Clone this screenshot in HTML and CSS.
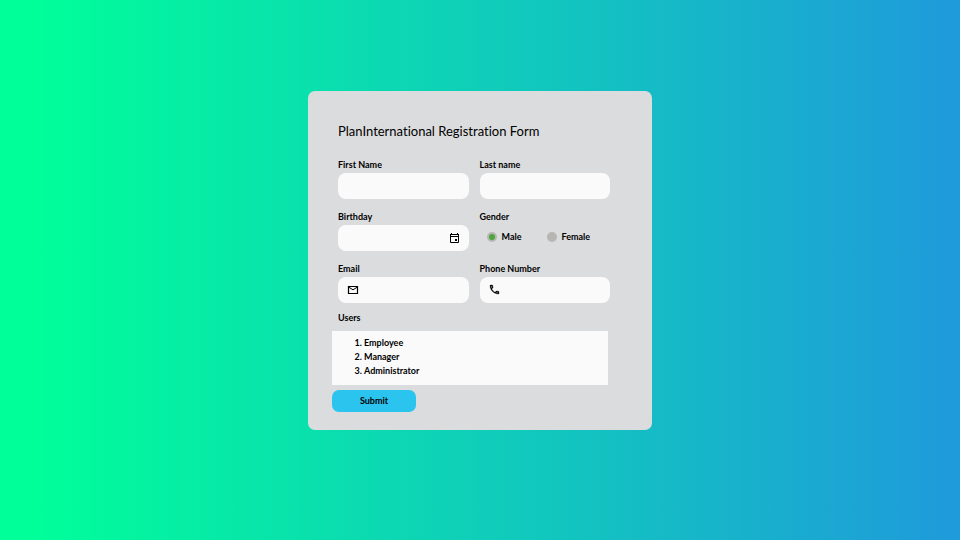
FILE: index.html
```html
<!DOCTYPE html>
<html lang="en">
<head>
<meta charset="utf-8">
<meta name="viewport" content="width=device-width, initial-scale=1">
<title>PlanInternational Registration Form</title>
<link rel="stylesheet" href="styles.css">
</head>
<body>
<form class="card">
  <h1 class="title">PlanInternational Registration Form</h1>
  <div class="fields">
    <div class="field">
      <label for="first">First Name</label>
      <input class="box" id="first" type="text">
    </div>
    <div class="field">
      <label for="last">Last name</label>
      <input class="box" id="last" type="text">
    </div>
    <div class="field">
      <label for="birthday">Birthday</label>
      <div class="control control-end">
        <input class="box" id="birthday" type="text">
        <svg class="icon" viewBox="0 0 12 12" aria-hidden="true"><path d="M2.500 2.500h8v8h-8z" fill="none" stroke="#000"/><path d="M2 2h9v1H2zM2 4h9v1H2zM3 1h1v1H3zM9 1h1v1H9zM7 7h2v2H7z"/></svg>
      </div>
    </div>
    <fieldset class="field group">
      <legend>Gender</legend>
      <div class="options">
        <label class="option"><input type="radio" name="gender" checked>Male</label>
        <label class="option"><input type="radio" name="gender">Female</label>
      </div>
    </fieldset>
    <div class="field">
      <label for="email">Email</label>
      <div class="control">
        <input class="box" id="email" type="email">
        <svg class="icon" viewBox="0 0 12 12" aria-hidden="true"><path d="M1.500 2.500h9v7h-9z" fill="none" stroke="#000" stroke-width="1.200"/><path d="M2 3.300l4 2.500 4-2.500" fill="none" stroke="#000"/></svg>
      </div>
    </div>
    <div class="field">
      <label for="phone">Phone Number</label>
      <div class="control">
        <input class="box" id="phone" type="tel">
        <svg class="icon" viewBox="1 1 24 24" aria-hidden="true"><path d="M6.540 5c.06.890.21 1.760.45 2.590l-1.200 1.200c-.41-1.200-.67-2.470-.76-3.790h1.510m9.860 12.020c.85.240 1.720.39 2.600.45v1.490c-1.320-.09-2.590-.35-3.800-.75l1.200-1.190M7.500 3H4c-.55 0-1 .45-1 1 0 9.390 7.610 17 17 17 .55 0 1-.45 1-1v-3.490c0-.55-.45-1-1-1-1.240 0-2.450-.2-3.570-.57-.35-.11-.74-.03-1.020.24l-2.200 2.200c-2.830-1.450-5.150-3.760-6.590-6.590l2.200-2.200c.28-.28.36-.67.25-1.020C8.700 6.450 8.500 5.250 8.500 4c0-.55-.45-1-1-1z" stroke="#000" stroke-width=".6"/></svg>
      </div>
    </div>
  </div>
  <h2 class="users-title">Users</h2>
  <ol class="users">
    <li>Employee</li>
    <li>Manager</li>
    <li>Administrator</li>
  </ol>
  <button class="submit" type="submit">Submit</button>
</form>
</body>
</html>
```
FILE: styles.css
```css
* {
  box-sizing: border-box;
}

body {
  margin: 0;
  min-height: 100vh;
  padding-bottom: 20px;
  display: grid;
  place-items: center;
  background: linear-gradient(90deg, #00ff99 3%, #1f9adb);
  font: 700 9px/12px Lato, "Open Sans", sans-serif;
  font-variant-ligatures: none;
  color: #000;
}

.card {
  width: min(344px, 100%);
  padding: 30px 42px 18px 24px;
  border-radius: 7px;
  background: #dbdcde;
}

.title {
  margin: 0 0 18px 6px;
  font-size: 13px;
  font-weight: 400;
  line-height: 20px;
}

.fields {
  display: grid;
  grid-template-columns: 1fr 1fr;
  gap: 12px 11px;
  margin: 0 0 9px 6px;
}

.field {
  min-width: 0;
}

.field > label,
.group legend {
  display: block;
  margin-bottom: 2px;
  padding: 0;
}

.group {
  margin: 0;
  padding: 0;
  border: 0;
}

.box {
  display: block;
  width: 100%;
  height: 26px;
  padding: 0 10px;
  border: 0;
  border-radius: 8px;
  background: #fafafa;
  font: inherit;
}

.control {
  display: grid;
  align-items: center;
}

.control > * {
  grid-area: 1 / 1;
}

.control .box {
  padding-left: 26px;
}

.control-end .box {
  padding: 0 26px 0 10px;
}

.icon {
  width: 12px;
  height: 12px;
  margin: 0 9px;
}

.control-end .icon {
  justify-self: end;
}

.options {
  display: flex;
  gap: 25px;
  padding: 6px 0 0 7px;
}

.option {
  display: flex;
  align-items: center;
  gap: 5px;
}

.option input {
  appearance: none;
  width: 10px;
  height: 10px;
  margin: 0;
  border-radius: 50%;
  background: #b7b6b3;
}

.option input:checked {
  border: 2px solid #b7b6b3;
  background: #4ba73c;
}

.users-title {
  margin: 0 0 7px 6px;
  font: inherit;
}

.users {
  margin: 0 2px 5px 0;
  padding: 5px 0 7px 32px;
  background: #fafafa;
  line-height: 14px;
}

.submit {
  display: block;
  width: 84px;
  height: 22px;
  padding: 0;
  border: 0;
  border-radius: 7px;
  background: #2bc4ef;
  color: inherit;
  font: inherit;
}
```
